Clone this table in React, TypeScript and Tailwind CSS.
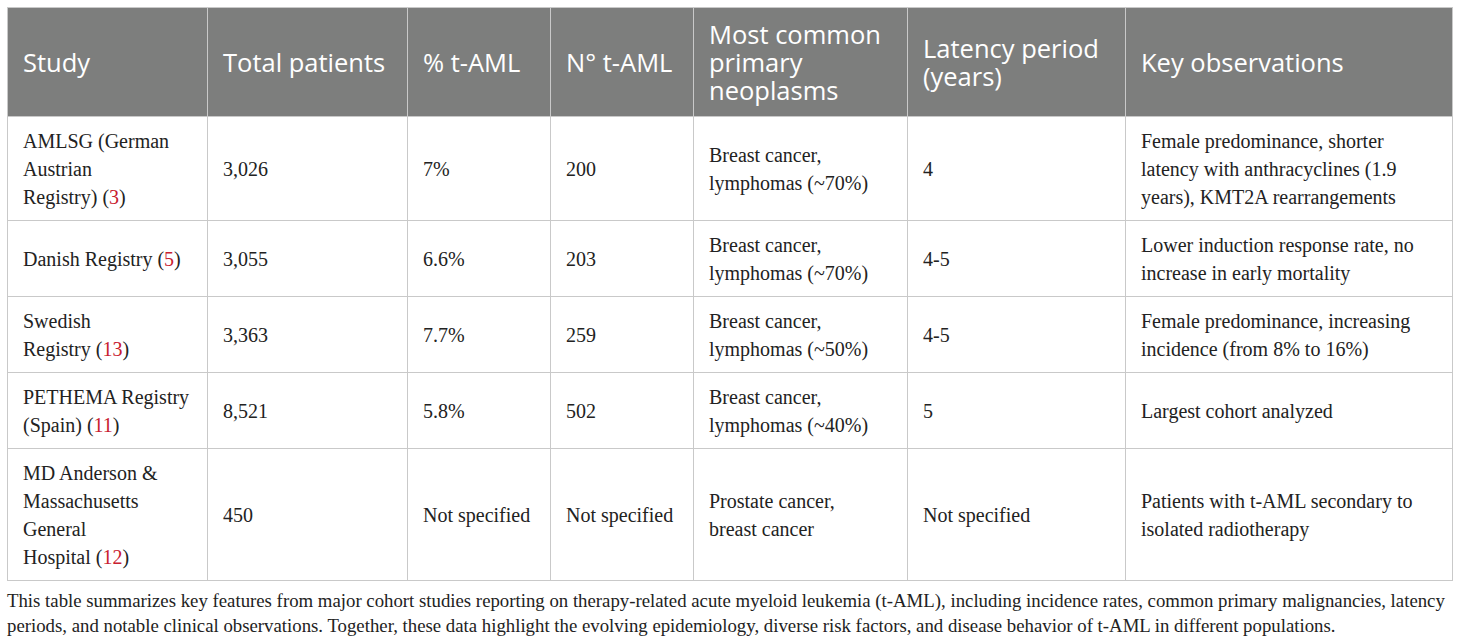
const rows = [
  {
    study: [["AMLSG (German"], ["Austrian"], ["Registry) (", "3", ")"]],
    total: "3,026",
    pct: "7%",
    n: "200",
    neo: ["Breast cancer,", "lymphomas (~70%)"],
    latency: "4",
    obs: "Female predominance, shorter latency with anthracyclines (1.9 years), KMT2A rearrangements",
  },
  {
    study: [["Danish Registry (", "5", ")"]],
    total: "3,055",
    pct: "6.6%",
    n: "203",
    neo: ["Breast cancer,", "lymphomas (~70%)"],
    latency: "4-5",
    obs: "Lower induction response rate, no increase in early mortality",
  },
  {
    study: [["Swedish"], ["Registry (", "13", ")"]],
    total: "3,363",
    pct: "7.7%",
    n: "259",
    neo: ["Breast cancer,", "lymphomas (~50%)"],
    latency: "4-5",
    obs: "Female predominance, increasing incidence (from 8% to 16%)",
  },
  {
    study: [["PETHEMA Registry"], ["(Spain) (", "11", ")"]],
    total: "8,521",
    pct: "5.8%",
    n: "502",
    neo: ["Breast cancer,", "lymphomas (~40%)"],
    latency: "5",
    obs: "Largest cohort analyzed",
  },
  {
    study: [["MD Anderson &"], ["Massachusetts"], ["General"], ["Hospital (", "12", ")"]],
    total: "450",
    pct: "Not specified",
    n: "Not specified",
    neo: ["Prostate cancer,", "breast cancer"],
    latency: "Not specified",
    obs: "Patients with t-AML secondary to isolated radiotherapy",
  },
];

const th = "border border-[#c9c9c9] px-[15px] py-[12px] text-left align-middle font-normal";
const td = "border border-[#c9c9c9] px-[15px] pt-[10px] pb-[9px] align-middle";

export default function App() {
  return (
    <div className="min-h-screen bg-white pl-[7px] pr-[8px] pt-[7px] text-[#222]">
      <table className="w-[1445px] table-fixed border-collapse">
        <colgroup>
          <col className="w-[200px]" />
          <col className="w-[200px]" />
          <col className="w-[143px]" />
          <col className="w-[143px]" />
          <col className="w-[214px]" />
          <col className="w-[218px]" />
          <col className="w-[327px]" />
        </colgroup>
        <thead>
          <tr className="bg-[#7d7e7d] font-['Open_Sans',sans-serif] text-[25.5px] leading-[28px] text-white">
            <th className={th}>Study</th>
            <th className={th + " whitespace-nowrap"}>Total patients</th>
            <th className={th + " whitespace-nowrap"}>% t-AML</th>
            <th className={th + " whitespace-nowrap"}>N° t-AML</th>
            <th className={th}>
              Most common
              <br />
              primary
              <br />
              neoplasms
            </th>
            <th className={th}>
              Latency period
              <br />
              (years)
            </th>
            <th className={th}>Key observations</th>
          </tr>
        </thead>
        <tbody className="font-['Liberation_Serif',serif] text-[20px] leading-[28px]">
          {rows.map((r, i) => (
            <tr key={i}>
              <td className={td}>
                {r.study.map((line, j) => (
                  <div key={j} className="whitespace-nowrap">
                    {line[0]}
                    {line[1] && <span className="text-[#c8202f]">{line[1]}</span>}
                    {line[2]}
                  </div>
                ))}
              </td>
              <td className={td}>{r.total}</td>
              <td className={td}>{r.pct}</td>
              <td className={td}>{r.n}</td>
              <td className={td}>
                {r.neo.map((line, j) => (
                  <div key={j} className="whitespace-nowrap">
                    {line}
                  </div>
                ))}
              </td>
              <td className={td}>{r.latency}</td>
              <td className={td}>{r.obs}</td>
            </tr>
          ))}
        </tbody>
      </table>
      <p className="mt-[7px] w-[1445px] font-['Liberation_Serif',serif] text-[18.8px] leading-[25px] text-[#222]">
        This table summarizes key features from major cohort studies reporting on therapy-related acute myeloid
        leukemia (t-AML), including incidence rates, common primary malignancies, latency periods, and notable
        clinical observations. Together, these data highlight the evolving epidemiology, diverse risk factors, and
        disease behavior of t-AML in different populations.
      </p>
    </div>
  );
}
